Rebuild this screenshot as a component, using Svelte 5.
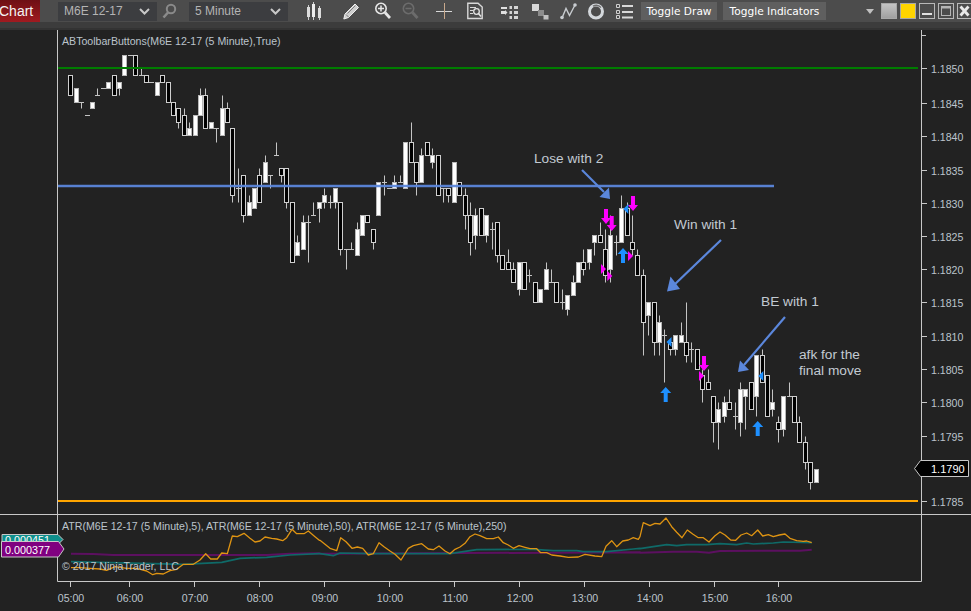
<script>
  // candles: [kind, bodyTop, bodyBottom, wickTop, wickBottom], in ticks below 1.1850
  const bars = [
    ['b',1,4],['w',3,5],['d',5,5,5,6],['d',7,7],['w',5,6],['d',4,4,3,4],['d',3,3],['w',2,3],['b',1,4],['w',2,3,2,4],
    ['w',-2,1],['d',-2,-2],['b',-2,1],['d',1,1,0,1],['b',1,2],['d',2,2],['w',2,4],['b',1,2],['b',2,5],['b',5,7],
    ['b',6,8,6,9],['b',7,10,6,10],['w',9,10,8,10],['w',7,10],['w',4,7,3,7],['b',4,9,3,9],['w',8,9],['d',9,9,9,11],['w',6,10,4,10],['b',6,8,5,8],
    ['b',9,19,9,20],['d',18,18,15,20],['b',16,22,16,23],['w',20,22,19,22],['w',18,21],['b',16,20,15,20],['w',14,17,13,17],['d',16,16,16,18],['d',13,13,11,13],['b',15,16,15,17],
    ['b',15,20,15,21],['b',20,29],['w',26,28,25,28],['w',23,27,22,27],['d',23,23,22,29],['d',22,22,20,22],['w',20,21,20,23],['w',19,20,18,21],['d',20,20,19,21],['w',18,20,18,21],
    ['b',20,27,20,28],['d',27,27,27,30],['d',27,27,26,27],['w',24,28,23,28],['w',22,25],['b',22,23],['b',24,26,24,27],['w',17,22],['d',17,17,16,19],['d',18,18],
    ['w',17,18,16,18],['d',17,17,16,17],['w',11,18],['b',11,14,8,14],['b',14,17,14,19],['w',13,17,12,17],['b',11,13],['w',13,14,12,15],['b',13,19],['d',18,18,18,20],
    ['b',18,19,18,20],['w',14,20],['b',17,19],['b',19,22,18,24],['b',22,26,20,28],['w',22,25,21,27],['b',21,25],['w',22,25,22,26],['d',24,24,23,27],['b',23,28,23,29],
    ['b',28,30],['b',29,30,27,30],['b',30,32,29,32],['w',29,33,29,34],['b',29,33],['d',31,31,30,32],['b',32,35],['w',33,35],['w',30,33,29,33],['d',32,32,30,32],
    ['b',32,35],['d',35,35,33,36],['w',34,36,34,37],['w',32,34,31,34],['w',29,32],['b',29,30,27,31],['w',27,29,27,30],['w',25,26,25,28],['b',25,26,23,26],['b',27,31,24,32],
    ['w',25,30,22,32],['d',26,26,25,28],['w',21,26,19,26],['b',21,25,20,25],['b',26,27,22,28],['b',28,31,27,31],['b',31,38,30,43],['w',35,37,35,40],['b',35,41,35,43],['w',38,41,37,43],
    ['d',40,40,39,47],['b',41,42,41,43],['w',40,42,40,43],['w',40,41,38,41],['b',41,43,35,44],['d',42,42,41,44],['b',42,45],['b',46,48,45,50],['b',47,48,45,48],['b',49,53,49,56],
    ['w',51,53,50,57],['w',50,52,49,53],['b',50,51,48,51],['d',52,52,50,54],['w',48,53,47,55],['w',48,49,48,54],['b',47,51],['w',43,49,43,52],['b',43,47,42,47],['b',46,52],
    ['w',50,51,48,52],['b',53,54,52,56],['w',49,54,49,55],['d',49,49,47,49],['b',49,53],['b',53,56,52,56],['b',56,59,55,60],['b',59,62,59,63],['w',60,62]
  ];

  const barX = (i) => Math.round(70.3 + 5.4 * i);
  const tickY = (t) => Math.round(68.2 + 6.68 * t) + 0.5;

  const prices = ['1.1850','1.1845','1.1840','1.1835','1.1830','1.1825','1.1820','1.1815','1.1810','1.1805','1.1800','1.1795'];
  const priceYs = [68,103,136,170,203,236,269,302,336,369,402,436];
  const hours = [
    ['05:00',70],['06:00',129],['07:00',194],['08:00',259],['09:00',324],['10:00',389],
    ['11:00',454],['12:00',519],['13:00',584],['14:00',649],['15:00',714],['16:00',778]
  ];

  // ATR traces, noted as pairs at 3x per crop of the panel
  function trace(parts) {
    return parts
      .map(([ox, oy, s]) =>
        s.split(' ').map((p) => {
          const [x, y] = p.split(',').map(Number);
          return (ox + x / 3).toFixed(1) + ',' + (oy + y / 3).toFixed(1);
        }).join(' ')
      )
      .join(' ');
  }

  const atrFast = trace([
    [0,505,'213,188 240,188 270,190 300,192 320,196 345,185 380,190 410,190 440,198 458,209 470,205 490,207 510,197 530,193 550,178 580,178 600,165 617,146 632,162 652,162 665,144 682,146 697,93 712,95 732,85 750,100 765,111 780,108 795,96 815,100 830,102 848,107 860,98 876,73 890,86 912,86 925,78 945,95 958,106'],
    [320,505,'0,106 15,118 30,130 50,137 62,98 78,110 96,130 112,126 128,130 145,150 160,146 177,113 192,125 210,138 225,148 243,165 265,130 280,122 305,116 325,132 340,134 357,123 375,138 390,146 405,133 420,126 435,115 450,95 465,87 480,92 500,101 520,101 535,96 550,113 565,120 580,130 597,122 615,127 630,131 650,131 662,143 680,143 695,150 720,153 745,157 775,156 795,148 825,153 845,155 858,124 875,107 890,125 908,108 925,105 940,98 955,103'],
    [640,440,'0,290 10,248 30,257 45,250 60,252 78,234 95,260 110,277 126,293 142,270 158,282 175,293 190,293 207,306 225,287 240,276 255,285 272,300 287,301 303,285 320,279 335,287 353,270 368,288 385,284 400,290 418,285 435,282 450,295 470,302 490,304 500,303 515,308']
  ]);
  const atrMid = trace([
    [0,505,'213,170 300,172 430,175 550,178 665,172 720,160 800,157 870,150 958,146'],
    [320,505,'0,146 40,152 60,144 150,146 390,146 470,134 640,133 700,137 770,137 790,140 860,140 940,132 960,130'],
    [640,440,'0,326 40,320 80,314 110,317 140,314 200,314 240,311 290,314 320,309 340,312 400,309 430,306 515,308']
  ]);
  const atrSlow = trace([
    [0,505,'213,146 280,147 340,150 800,150 870,146 958,145'],
    [320,505,'0,146 960,142'],
    [640,440,'0,338 100,335 170,335 207,338 240,333 480,332 515,329']
  ]);

  const downArrows = [[606,209],[611.7,216],[633,196],[704,356]];
  const upArrows = [[623,248],[665.7,387],[757.7,421]];
  const entries = [[623.3,209],[666.5,342],[758.3,376]];
  const exits = [[601,269],[607.3,276],[628,256],[699,376]];
</script>

<div class="toolbar">
  <div class="tab">Chart</div>
  <div class="select first">M6E 12-17<svg width="11" height="7" viewBox="0 0 11 7"><path d="M1 1l4.5 4.5L10 1" fill="none" stroke="#c8c8c8" stroke-width="2"/></svg></div>
  <svg class="search" width="15" height="16" viewBox="0 0 15 16"><circle cx="9" cy="6" r="4.2" fill="none" stroke="#8a8a8a" stroke-width="2"/><path d="M6 9.500L1.500 14.500" stroke="#8a8a8a" stroke-width="2.600"/></svg>
  <div class="select second">5 Minute<svg width="11" height="7" viewBox="0 0 11 7"><path d="M1 1l4.500 4.500L10 1" fill="none" stroke="#c8c8c8" stroke-width="2"/></svg></div>

  <!-- chart style -->
  <svg class="tool g18" width="16" height="18" viewBox="0 0 16 18">
    <path d="M2.500 3v15M7.500 0v18M13.500 4v15" stroke="#cfcfcf"/>
    <rect x="1" y="5" width="3" height="10" fill="#dcdcdc"/><rect x="6" y="2" width="3" height="13" fill="#ececec"/><rect x="12" y="6" width="3" height="10" fill="#dcdcdc"/>
  </svg>
  <!-- pencil -->
  <svg class="tool g21" width="17" height="18" viewBox="0 0 17 18">
    <path d="M.8 17l1.200-5L12 2l3.500 3.500-10 10z" fill="#cfcfcf" stroke="#eee" stroke-width="1"/><path d="M3 12.500l2.500 2.500M4.500 11.500l8-8" stroke="#666" stroke-width=".8"/>
  </svg>
  <!-- zoom in / out -->
  <svg class="tool g14" width="17" height="18" viewBox="0 0 17 18">
    <circle cx="7" cy="6.500" r="5.200" fill="none" stroke="#e6e6e6" stroke-width="1.600"/><path d="M4 6.500h6M7 3.500v6" stroke="#e6e6e6" stroke-width="1.500"/><path d="M11 10.500l5 5.500" stroke="#e6e6e6" stroke-width="2.800"/>
  </svg>
  <svg class="tool g11" width="17" height="18" viewBox="0 0 17 18">
    <circle cx="6.500" cy="6.500" r="5.200" fill="none" stroke="#6c6c6c" stroke-width="1.600"/><path d="M3.500 6.500h6" stroke="#6c6c6c" stroke-width="1.500"/><path d="M10.500 10.500l5 5.500" stroke="#6c6c6c" stroke-width="2.800"/>
  </svg>
  <!-- crosshair -->
  <svg class="tool g17" width="16" height="18" viewBox="0 0 16 18"><path d="M0 9.500h16" stroke="#d8d8d8"/><path d="M8.500 1v16" stroke="#c8a98c"/></svg>
  <!-- data box -->
  <svg class="tool g15" width="16" height="18" viewBox="0 0 16 18">
    <path d="M.8 1.200H11L15.200 5v11.500H.8z" fill="none" stroke="#d8d8d8" stroke-width="1.400"/><path d="M3 5.500h6M3 8.500h3M3 11.500h3" stroke="#d8d8d8"/>
    <circle cx="9.500" cy="9.500" r="2.800" fill="none" stroke="#e4e4e4" stroke-width="1.300"/><path d="M11.500 11.500l2.500 3" stroke="#e4e4e4" stroke-width="1.600"/>
  </svg>
  <!-- properties -->
  <svg class="tool g18" width="17" height="18" viewBox="0 0 17 18">
    <path d="M0 5h6v2H0zM0 9h4V8l2.500 2.500L4 13v-1H0z" fill="#e0e0e0"/>
    <path d="M8.500 4h2.500v3H8.500zM13 4h4v3h-4zM8.500 9h2.500v3H8.500zM13 9h4v3h-4zM8.500 14h2.500v3H8.500zM13 14h4v3h-4z" fill="#d4d4d4"/>
  </svg>
  <!-- stacked squares -->
  <svg class="tool g14" width="17" height="18" viewBox="0 0 17 18">
    <rect x="0" y="2" width="7" height="7" fill="#d8d8d8"/><rect x="6" y="8" width="6" height="6" fill="#8c8c8c"/><rect x="11.500" y="13" width="5" height="4.500" fill="#c0c0c0"/>
  </svg>
  <!-- drawing tools -->
  <svg class="tool g11" width="17" height="18" viewBox="0 0 17 18">
    <path d="M2 16L6 6.500l3.500 7L15 3" fill="none" stroke="#c8ccd0" stroke-width="1.400"/>
    <circle cx="2" cy="15.500" r="1.800" fill="#c8ccd0"/><circle cx="15" cy="3" r="1.800" fill="#c8ccd0"/>
  </svg>
  <!-- reload -->
  <svg class="tool g11" width="17" height="18" viewBox="0 0 17 18">
    <circle cx="8" cy="9.500" r="6.500" fill="none" stroke="#d4d8dc" stroke-width="3"/><path d="M5 4.200A6.500 6.500 0 0 1 13 5.500" fill="none" stroke="#6e6e6e" stroke-width="1.400"/>
  </svg>
  <!-- list -->
  <svg class="tool g11" width="17" height="18" viewBox="0 0 17 18">
    <path d="M.5 2.500h3v3h-3zM.5 8.500h3v3h-3zM.5 13.500h3v3h-3z" fill="none" stroke="#cfcfcf"/><path d="M6 4h11M6 10h11M6 15.500h11" stroke="#d8d8d8" stroke-width="1.800"/>
  </svg>

  <button class="toggle draw">Toggle Draw</button>
  <button class="toggle ind">Toggle Indicators</button>

  <span class="caret"></span>
  <span class="swatch grey"></span>
  <span class="swatch yellow"></span>
  <span class="win"><svg width="16" height="16" viewBox="0 0 16 16"><path d="M3 11h10" stroke="#e0e0e0" stroke-width="2"/></svg></span>
  <span class="win"><svg width="16" height="16" viewBox="0 0 16 16"><rect x="3.500" y="3.500" width="9" height="9" fill="none" stroke="#b4b4b4"/><path d="M3.500 4.500h9" stroke="#b4b4b4" stroke-width="2"/></svg></span>
  <span class="win"><svg width="16" height="16" viewBox="0 0 16 16"><path d="M3.500 3.500l8 9M11.500 3.500l-8 9" stroke="#e8e8e8" stroke-width="2.800"/></svg></span>
</div>
<div class="strip"></div>

<svg class="chart" width="971" height="581" viewBox="0 30 971 581">
  <!-- frame -->
  <path d="M57.500 30V581.500H921.500V30M0 514.500H971" fill="none" stroke="#c8c8c8"/>
  <path d="M922 35.500h4" stroke="#c8c8c8"/>

  {#each priceYs as y, i}
    <path d="M922 {y + 0.5}h5" stroke="#c8c8c8"/>
    <text class="axis" x="931" y={y + 5}>{prices[i]}</text>
  {/each}
  <path d="M922 501.500h5" stroke="#c8c8c8"/>
  <text class="axis" x="931" y="506">1.1785</text>

  {#each hours as [label, x]}
    <path d="M{x + 0.5} 582v5" stroke="#c8c8c8"/>
    <text class="axis mid" x={x + 1} y="602">{label}</text>
  {/each}

  <text class="axis" x="62" y="45">ABToolbarButtons(M6E 12-17 (5 Minute),True)</text>
  <text class="axis" x="62" y="530">ATR(M6E 12-17 (5 Minute),5), ATR(M6E 12-17 (5 Minute),50), ATR(M6E 12-17 (5 Minute),250)</text>

  <!-- candles -->
  {#each bars as [kind, top, bottom, hi, lo], i}
    {@const cx = barX(i)}
    {#if hi !== undefined}
      <path d="M{cx + 0.5} {tickY(hi)}V{tickY(lo)}" stroke="#c4c4c4"/>
    {/if}
    {#if kind === 'd'}
      <path d="M{cx - 2} {tickY(top)}h5" stroke="#c4c4c4"/>
    {:else}
      <rect class={kind} x={cx - 1.5} y={tickY(top)} width="4" height={tickY(bottom) - tickY(top)}/>
    {/if}
  {/each}

  <!-- levels -->
  <path d="M58 68H918" stroke="#007c00" stroke-width="2"/>
  <path d="M58 186H774" stroke="#5b87dc" stroke-width="2.400" opacity="0.95"/>
  <path d="M58 501H918" stroke="#ffa500" stroke-width="2"/>

  <!-- trade markers -->
  {#each downArrows as [x, y]}
    <path d="M{x - 2} {y}h4v9h3l-5 6-5-6h3z" fill="#ff00ff"/>
  {/each}
  {#each upArrows as [x, y]}
    <path d="M{x} {y}l5.500 6h-3.500v9h-4v-9h-3.500z" fill="#1e90ff"/>
  {/each}
  {#each entries as [x, y]}
    <path d="M{x} {y}l5-5v10z" fill="#1e90ff"/>
  {/each}
  {#each exits as [x, y]}
    <path d="M{x} {y - 5}l5 5-5 5z" fill="#ff00ff"/>
  {/each}

  <!-- annotations -->
  <g class="note-arrow">
    <path d="M582 170L604 192"/>
    <path d="M721 240L673 286"/>
    <path d="M785 317L744 365"/>
  </g>
  <path d="M610 199l-10.500-2 9.500-9.500z" fill="#5b87dc"/>
  <path d="M667 291.500l13-2.500-9.500-12.500z" fill="#5b87dc"/>
  <path d="M738 372l11-2-9-9.500z" fill="#5b87dc"/>
  <text class="note" x="534" y="163">Lose with 2</text>
  <text class="note" x="674" y="229">Win with 1</text>
  <text class="note" x="761" y="306">BE with 1</text>
  <text class="note" x="799" y="359">afk for the</text>
  <text class="note" x="799" y="375">final move</text>

  <!-- ATR panel -->
  <polyline points={atrSlow} class="trace" stroke="#5c1060" stroke-width="2"/>
  <polyline points={atrMid} class="trace" stroke="#0f6a68" stroke-width="1.700"/>
  <polyline points={atrFast} class="trace" stroke="#df9412" stroke-width="1.300"/>
  <text class="axis" x="62" y="570">© 2017 NinjaTrader, LLC</text>

  <path d="M2 534.500H58l5 5-5 5H2z" fill="#0f8f8c" stroke="#c8c8c8"/>
  <text class="tag-text" x="5" y="544">0.000451</text>
  <path d="M1.500 541.500H58.500l5.500 7.500-5.500 8H1.500z" fill="#800080" stroke="#c8c8c8"/>
  <text class="tag-text" x="5" y="553.500">0.000377</text>

  <path d="M914.500 468.500l6-8H968.500V476.500H920.500z" fill="#000" stroke="#c8c8c8"/>
  <text class="tag-text last" x="931" y="473">1.1790</text>
</svg>

<style>
  :global(body) {
    background: #222;
    margin: 0;
  }

  .toolbar {
    display: flex;
    align-items: center;
    height: 22px;
    background: #4c4c4c;
    font-family: "Liberation Sans", Arial, sans-serif;
    overflow: hidden;
  }

  .tab {
    flex: none;
    width: 40px;
    height: 22px;
    line-height: 22px;
    font-size: 14px;
    color: #f4f4f4;
    text-indent: -1px;
    background: linear-gradient(#6e0f14, #a01a20);
  }

  .select {
    flex: none;
    display: flex;
    align-items: center;
    justify-content: space-between;
    box-sizing: border-box;
    width: 99px;
    height: 19px;
    padding: 0 7px 0 6px;
    background: #3c3d40;
    color: #b4b4b4;
    font-size: 12px;
  }

  .first { margin-left: 18px; }
  .second { margin-left: 12px; }
  .search { flex: none; margin-left: 5px; }

  .tool { flex: none; }
  .g11 { margin-left: 11px; }
  .g14 { margin-left: 14px; }
  .g15 { margin-left: 15px; }
  .g17 { margin-left: 17px; }
  .g18 { margin-left: 18px; }
  .g21 { margin-left: 21px; }

  .toggle {
    flex: none;
    height: 18px;
    padding: 0;
    border: none;
    background: #5f5f5f;
    color: #fff;
    font-family: "DejaVu Sans", sans-serif;
    font-size: 10.6px;
    line-height: 18px;
    text-align: center;
  }
  .draw { margin-left: 8px; width: 76px; }
  .ind { margin-left: 6px; width: 103px; }

  .caret {
    flex: none;
    margin-left: 40px;
    border-left: 4px solid transparent;
    border-right: 4px solid transparent;
    border-top: 5px solid #c0c0c0;
  }

  .swatch {
    flex: none;
    box-sizing: border-box;
    width: 16px;
    height: 16px;
    border: 1px solid #a8a8a8;
  }
  .grey { margin-left: 7px; background: linear-gradient(#c4c4c4, #a0a0a0); }
  .yellow { margin-left: 3px; background: #ffd400; }

  .win {
    flex: none;
    box-sizing: border-box;
    width: 16px;
    height: 16px;
    margin-left: 3px;
    border: 1px solid #b8b8b8;
    display: block;
  }
  .win svg { display: block; margin: -1px; }

  .strip {
    height: 8px;
    box-sizing: border-box;
    background: #3c3c3c;
    border-bottom: 2px solid #333;
  }

  .chart { display: block; }

  .axis {
    font-family: "Liberation Sans", Arial, sans-serif;
    font-size: 10.6px;
    fill: #bcc4cc;
  }
  .mid { text-anchor: middle; }

  .b { fill: #000; stroke: #cfcfcf; }
  .w { fill: #fff; stroke: #b8b8b8; }

  .note {
    font-family: "Liberation Sans", Arial, sans-serif;
    font-size: 13.7px;
    fill: #c2cad2;
  }
  .note-arrow path { stroke: #5b87dc; stroke-width: 2.200; fill: none; }

  .trace { fill: none; stroke-linejoin: round; }

  .tag-text {
    font-family: "Liberation Sans", Arial, sans-serif;
    font-size: 10.8px;
    fill: #fff;
  }
  .last { font-size: 11px; }
</style>
